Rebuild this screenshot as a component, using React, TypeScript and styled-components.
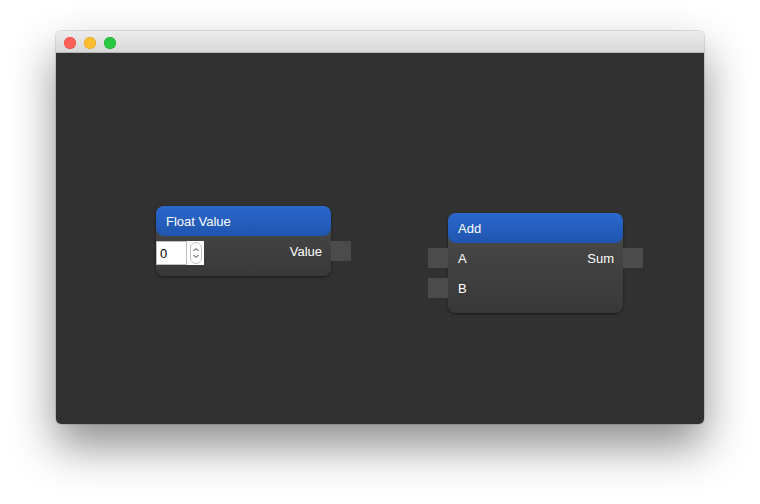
import React from 'react';
import styled, { createGlobalStyle } from 'styled-components';

interface PortDef {
  name: string;
}

interface NodeDef {
  id: string;
  title: string;
  x: number;
  y: number;
  inputs: PortDef[];
  outputs: PortDef[];
  control?: boolean;
}

const nodes: NodeDef[] = [
  { id: 'float', title: 'Float Value', x: 100, y: 153, inputs: [], outputs: [{ name: 'Value' }], control: true },
  { id: 'add', title: 'Add', x: 392, y: 160, inputs: [{ name: 'A' }, { name: 'B' }], outputs: [{ name: 'Sum' }] },
];

const GlobalStyle = createGlobalStyle`
  html, body {
    margin: 0;
    padding: 0;
    background: #ffffff;
    font-family: "Liberation Sans", Arial, sans-serif;
  }
`;

const Page = styled.div`
  padding: 31px 56px;
  width: 760px;
  height: 504px;
  box-sizing: border-box;
`;

const Window = styled.div`
  width: 648px;
  height: 393px;
  border-radius: 5px;
  overflow: hidden;
  display: flex;
  flex-direction: column;
  box-shadow: 0 22px 45px rgba(0, 0, 0, 0.45), 0 0 0 1px rgba(0, 0, 0, 0.12);
`;

const TitleBar = styled.div`
  height: 19px;
  flex: none;
  display: flex;
  align-items: center;
  gap: 8px;
  padding-left: 8px;
  padding-top: 2px;
  box-sizing: content-box;
  background: linear-gradient(#ececec, #d8d8d8);
  border-bottom: 1px solid #b4b4b4;
`;

const Light = styled.span<{ $color: string; $edge: string }>`
  width: 12px;
  height: 12px;
  border-radius: 50%;
  background: ${(p) => p.$color};
  box-shadow: inset 0 0 0 0.5px ${(p) => p.$edge};
`;

const Canvas = styled.div`
  flex: 1;
  position: relative;
  background: #313131;
`;

const Node = styled.div`
  position: absolute;
  width: 175px;
  border-radius: 8px;
  background: linear-gradient(#4c4c4c, #383838);
  box-shadow: 0 1px 3px rgba(0, 0, 0, 0.5);
  padding-bottom: 10px;
  color: #ffffff;
  font-size: 13px;
`;

const Header = styled.div`
  height: 30px;
  display: flex;
  align-items: center;
  padding-left: 10px;
  border-radius: 8px;
  background: linear-gradient(#2a68cd, #1f55ae);
`;

const Row = styled.div`
  position: relative;
  height: 30px;
  display: flex;
  align-items: center;
  justify-content: space-between;
  padding: 0 9px 0 10px;
`;

const Label = styled.span<{ $right?: boolean }>`
  margin-left: ${(p) => (p.$right ? 'auto' : '0')};
`;

const Port = styled.div<{ $side: 'left' | 'right' }>`
  position: absolute;
  top: 5px;
  ${(p) => p.$side}: -20px;
  width: 20px;
  height: 20px;
  background: #4b4b4b;
`;

const SpinBox = styled.div`
  position: absolute;
  left: 0;
  top: 5px;
  width: 48px;
  height: 24px;
  background: #ffffff;
  display: flex;
  align-items: center;
`;

const Field = styled.div`
  width: 31px;
  height: 24px;
  box-sizing: border-box;
  border: 1px solid #bdbdbd;
  color: #000000;
  font-size: 13px;
  padding-left: 3px;
  display: flex;
  align-items: center;
`;

const Stepper = styled.div`
  margin-left: 3px;
  width: 12px;
  height: 22px;
  box-sizing: border-box;
  border: 1px solid #c4c4c4;
  border-radius: 6px;
  display: flex;
  align-items: center;
  justify-content: center;
`;

const App: React.FC = (): JSX.Element => {
  return (
    <Page>
      <GlobalStyle />
      <Window>
        <TitleBar>
          <Light $color="#fc5f57" $edge="#de4a42" />
          <Light $color="#fdbc2e" $edge="#dea123" />
          <Light $color="#29c840" $edge="#1aab2c" />
        </TitleBar>
        <Canvas>
          {nodes.map((node) => {
            const rows = Math.max(node.inputs.length, node.outputs.length, 1);
            return (
              <Node key={node.id} style={{ left: node.x, top: node.y }}>
                <Header>{node.title}</Header>
                {Array.from({ length: rows }).map((_, i) => (
                  <Row key={i}>
                    {node.control && i === 0 && (
                      <SpinBox>
                        <Field>0</Field>
                        <Stepper>
                          <svg width="8" height="14" viewBox="0 0 8 14">
                            <path d="M1.5 5 L4 2.5 L6.5 5 M1.5 9 L4 11.5 L6.5 9" fill="none" stroke="#333" strokeWidth="1" />
                          </svg>
                        </Stepper>
                      </SpinBox>
                    )}
                    {node.inputs[i] && (
                      <>
                        <Port $side="left" />
                        <Label>{node.inputs[i].name}</Label>
                      </>
                    )}
                    {node.outputs[i] && (
                      <>
                        <Label $right>{node.outputs[i].name}</Label>
                        <Port $side="right" />
                      </>
                    )}
                  </Row>
                ))}
              </Node>
            );
          })}
        </Canvas>
      </Window>
    </Page>
  );
};

export default App;
